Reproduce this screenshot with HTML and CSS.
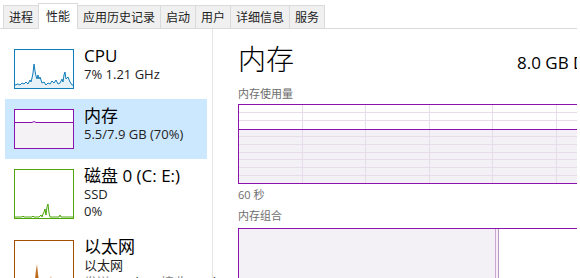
FILE: index.html
```html
<!DOCTYPE html>
<html lang="zh-CN">
<head>
    <meta charset="UTF-8">
    <meta name="viewport" content="width=device-width, initial-scale=1.0">
    <title>任务管理器 - 性能</title>
    <link rel="stylesheet" href="styles.css">
</head>
<body>
<div class="window">
    <div class="tabs">
        <div class="tab">进程</div>
        <div class="tab active">性能</div>
        <div class="tab">应用历史记录</div>
        <div class="tab">启动</div>
        <div class="tab">用户</div>
        <div class="tab">详细信息</div>
        <div class="tab">服务</div>
    </div>

    <div class="main">
        <div class="sidebar">
            <div class="item">
                <svg class="thumb" width="60" height="40" viewBox="0 0 60 40">
                    <polygon fill="#e6f1f8" points="1,39 1,36 4,35 6,36 8,34 10,35 12,33 14,35 16,31 17,33 18,29 19,24 20,15 21,22 22,27 23,30 24,26 25,30 26,28 28,34 30,33 32,36 34,34 36,35 38,32 40,34 42,31 44,35 46,34 48,30 49,33 50,26 51,23 52,30 54,28 56,33 58,36 59,36 59,39"/>
                    <polyline fill="none" stroke="#117dbb" stroke-width="1" points="1,36 4,35 6,36 8,34 10,35 12,33 14,35 16,31 17,33 18,29 19,24 20,15 21,22 22,27 23,30 24,26 25,30 26,28 28,34 30,33 32,36 34,34 36,35 38,32 40,34 42,31 44,35 46,34 48,30 49,33 50,26 51,23 52,30 54,28 56,33 58,36 59,36"/>
                    <rect x="0.5" y="0.5" width="59" height="39" fill="none" stroke="#117dbb"/>
                </svg>
                <div class="info">
                    <div class="name">CPU</div>
                    <div class="sub">7% 1.21 GHz</div>
                </div>
            </div>

            <div class="item selected">
                <svg class="thumb" width="60" height="40" viewBox="0 0 60 40">
                    <rect x="0" y="0" width="60" height="40" fill="#ffffff"/>
                    <rect x="1" y="13" width="58" height="26" fill="#f4f2f4"/>
                    <polyline fill="none" stroke="#8b12ae" stroke-width="1" points="1,13.5 18,13.5 20,12.5 22,13.5 59,13.5"/>
                    <rect x="0.5" y="0.5" width="59" height="39" fill="none" stroke="#8b12ae"/>
                </svg>
                <div class="info">
                    <div class="name">内存</div>
                    <div class="sub">5.5/7.9 GB (70%)</div>
                </div>
            </div>

            <div class="item">
                <svg class="thumb" width="60" height="50" viewBox="0 0 60 50">
                    <polyline fill="none" stroke="#4da60c" stroke-width="1" points="1,48 8,48 9,47 10,48 18,48 19,47 20,48 25,48 27,46 28,48 29,45 30,43 31,40 32,46 33,38 34,35 35,44 36,48 45,48 46,46 47,48 59,48"/>
                    <rect x="0.5" y="0.5" width="59" height="49" fill="none" stroke="#4da60c"/>
                </svg>
                <div class="info">
                    <div class="name">磁盘 0 (C: E:)</div>
                    <div class="sub">SSD</div>
                    <div class="sub">0%</div>
                </div>
            </div>

            <div class="item">
                <svg class="thumb" width="60" height="50" viewBox="0 0 60 50">
                    <polygon fill="#c47a2c" points="18,50 19,44 20,48 21,38 22,30 23,24 24,34 25,40 26,50"/>
                    <polygon fill="#c47a2c" points="35,50 36,40 37,36 38,42 39,50"/>
                    <polygon fill="#a74f01" points="22,50 23,28 24,50"/>
                    <rect x="0.5" y="0.5" width="59" height="60" fill="none" stroke="#a74f01"/>
                </svg>
                <div class="info">
                    <div class="name">以太网</div>
                    <div class="sub">以太网</div>
                    <div class="sub"><span class="dim">发送:</span> 0 Kbps <span class="dim">接收:</span> 0 Kbps</div>
                </div>
            </div>
        </div>

        <div class="detail">
            <div class="header">
                <div class="title">内存</div>
                <div class="spec">8.0 GB DDR3</div>
            </div>

            <div class="label first">内存使用量</div>
            <svg class="graph" width="360" height="80" viewBox="0 0 360 80">
                <rect x="1" y="25" width="358" height="54" fill="#f4f1f6"/>
                <g stroke="#e6dcea" stroke-width="1">
                    <line x1="1" y1="8.5" x2="359" y2="8.5"/>
                    <line x1="1" y1="16.5" x2="359" y2="16.5"/>
                    <line x1="1" y1="32.5" x2="359" y2="32.5"/>
                    <line x1="1" y1="40.5" x2="359" y2="40.5"/>
                    <line x1="1" y1="48.5" x2="359" y2="48.5"/>
                    <line x1="1" y1="55.5" x2="359" y2="55.5"/>
                    <line x1="1" y1="63.5" x2="359" y2="63.5"/>
                    <line x1="1" y1="71.5" x2="359" y2="71.5"/>
                    <line x1="64.5" y1="1" x2="64.5" y2="79"/>
                    <line x1="127.5" y1="1" x2="127.5" y2="79"/>
                    <line x1="191.5" y1="1" x2="191.5" y2="79"/>
                    <line x1="254.5" y1="1" x2="254.5" y2="79"/>
                    <line x1="318.5" y1="1" x2="318.5" y2="79"/>
                </g>
                <line x1="1" y1="25.5" x2="359" y2="25.5" stroke="#8b12ae"/>
                <rect x="0.5" y="0.5" width="359" height="79" fill="none" stroke="#8b12ae"/>
            </svg>
            <div class="label time">60 秒</div>

            <div class="label combo">内存组合</div>
            <svg class="graph combo-graph" width="360" height="60" viewBox="0 0 360 60">
                <rect x="1" y="1" width="255" height="59" fill="#f4f1f6"/>
                <rect x="256" y="1" width="4" height="59" fill="#f8eef9"/>
                <line x1="257.5" y1="1" x2="257.5" y2="60" stroke="#c6a9d0"/>
                <line x1="260.5" y1="1" x2="260.5" y2="60" stroke="#b996c4"/>
                <rect x="0.5" y="0.5" width="359" height="70" fill="none" stroke="#8b12ae"/>
            </svg>
        </div>
    </div>
</div>
</body>
</html>
```

FILE: styles.css
```css
body {
    margin: 0;
    background: #ffffff;
    font-family: "Open Sans", "Noto Sans CJK SC", sans-serif;
    color: #000;
}
.window {
    width: 577px;
    height: 278px;
    overflow: hidden;
}

/* tab strip */
.tabs {
    display: flex;
    align-items: flex-end;
    height: 28px;
    padding-left: 3px;
    border-bottom: 1px solid #dadada;
}
.tab {
    height: 22px;
    line-height: 22px;
    padding: 0 5px;
    margin-right: -1px;
    border: 1px solid #dadada;
    border-bottom: none;
    background: #f0f0f0;
    font-family: "Noto Sans CJK SC", sans-serif;
    font-size: 12px;
    color: #222;
}
.tab.active {
    height: 25px;
    line-height: 24px;
    padding: 0 7px;
    background: #ffffff;
    margin-bottom: -1px;
    position: relative;
    z-index: 1;
}

/* layout */
.main {
    display: flex;
}
.sidebar {
    width: 202px;
    flex-shrink: 0;
    padding: 10px 5px 0 5px;
    border-right: 1px solid #e5e5e5;
}
.item {
    display: flex;
    gap: 10px;
    padding: 10px 0 10px 9px;
}
.item.selected {
    background: #cce8ff;
}
.thumb {
    display: block;
    flex-shrink: 0;
}
.info {
    margin-top: -4px;
    white-space: nowrap;
}
.name {
    font-size: 17px;
    line-height: 21px;
}
.sub {
    font-size: 13px;
    line-height: 17px;
    color: #222;
}
.dim {
    color: #888;
}

/* detail panel */
.detail {
    padding: 12px 0 0 25px;
    flex: 1;
    overflow: hidden;
}
.header {
    display: grid;
    grid-template-columns: 279px auto;
    align-items: end;
    white-space: nowrap;
}
.title {
    font-family: "Noto Sans CJK SC", sans-serif;
    font-weight: 300;
    font-size: 28px;
    line-height: 34px;
}
.spec {
    font-size: 17px;
    line-height: 20px;
    padding-bottom: 2px;
}
.label {
    font-family: "Open Sans", "Noto Sans CJK SC", sans-serif;
    font-size: 11px;
    line-height: 16px;
    color: #6d6d6d;
}
.label.first {
    margin-top: 11px;
}
.label.time {
    margin-top: 3px;
}
.label.combo {
    margin-top: 5px;
}
.graph {
    display: block;
    margin-top: 2px;
}
.graph.combo-graph {
    margin-top: 4px;
}
```
